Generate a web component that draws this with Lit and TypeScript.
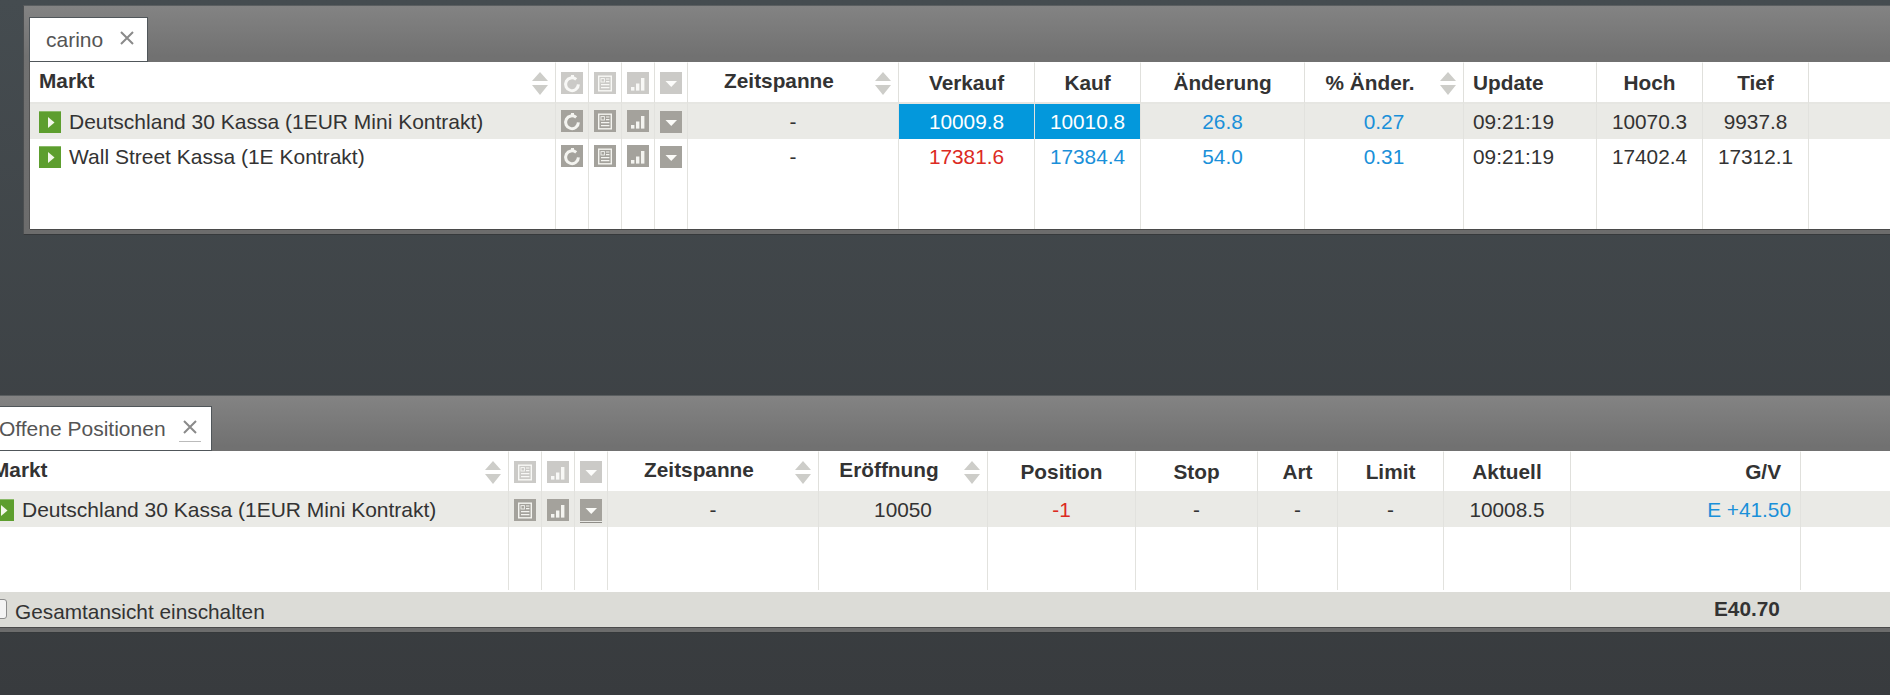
import { LitElement, html, css, svg } from 'lit';
import { customElement, property } from 'lit/decorators.js';

type IconName = 'refresh' | 'news' | 'bars' | 'menu';

interface Column {
  title?: string;
  width: number;
  kind?: 'market' | 'icon' | 'left' | 'right' | 'sort';
  icon?: IconName;
  raised?: boolean;
}

interface Cell {
  text: string;
  tone?: 'up' | 'down' | 'flash';
}

const ICONS: Record<IconName, unknown> = {
  refresh: svg`<path d="M15.2 7.4A6.4 6.4 0 1 0 17.4 12.4" fill="none" stroke="#f4f4f0" stroke-width="3"/><rect x="10" y="3" width="3" height="3.6" fill="#f4f4f0"/>`,
  news: svg`<rect x="4.7" y="4.2" width="12.6" height="14.6" fill="none" stroke="#f4f4f0" stroke-width="1.4"/><rect x="7" y="6.6" width="3.4" height="3.4" fill="none" stroke="#f4f4f0" stroke-width="0.9"/><path d="M12 7h3.4M12 9.6h3.4M7 12.6h8.4M7 15.6h8.4" stroke="#f4f4f0" stroke-width="1.2"/>`,
  bars: svg`<rect x="4" y="15" width="3.4" height="3.6" fill="#f4f4f0"/><rect x="9" y="11.5" width="3.4" height="7.1" fill="#f4f4f0"/><rect x="14" y="6" width="3.4" height="12.6" fill="#f4f4f0"/>`,
  menu: svg`<path d="M5.5 9h11.5l-5.75 6z" fill="#fbfbf8"/>`,
};

const WATCH_COLUMNS: Column[] = [
  { title: 'Markt', width: 526, kind: 'market', raised: true },
  { width: 33, kind: 'icon', icon: 'refresh' },
  { width: 33, kind: 'icon', icon: 'news' },
  { width: 33, kind: 'icon', icon: 'bars' },
  { width: 33, kind: 'icon', icon: 'menu' },
  { title: 'Zeitspanne', width: 211, kind: 'sort', raised: true },
  { title: 'Verkauf', width: 136 },
  { title: 'Kauf', width: 106 },
  { title: 'Änderung', width: 164 },
  { title: '% Änder.', width: 159, kind: 'sort' },
  { title: 'Update', width: 133, kind: 'left' },
  { title: 'Hoch', width: 106 },
  { title: 'Tief', width: 106 },
  { width: 200 },
];

const WATCH_ROWS: Cell[][] = [
  [
    { text: 'Deutschland 30 Kassa (1EUR Mini Kontrakt)' },
    { text: '' }, { text: '' }, { text: '' }, { text: '' },
    { text: '-' },
    { text: '10009.8', tone: 'flash' },
    { text: '10010.8', tone: 'flash' },
    { text: '26.8', tone: 'up' },
    { text: '0.27', tone: 'up' },
    { text: '09:21:19' },
    { text: '10070.3' },
    { text: '9937.8' },
    { text: '' },
  ],
  [
    { text: 'Wall Street Kassa (1E Kontrakt)' },
    { text: '' }, { text: '' }, { text: '' }, { text: '' },
    { text: '-' },
    { text: '17381.6', tone: 'down' },
    { text: '17384.4', tone: 'up' },
    { text: '54.0', tone: 'up' },
    { text: '0.31', tone: 'up' },
    { text: '09:21:19' },
    { text: '17402.4' },
    { text: '17312.1' },
    { text: '' },
  ],
];

const POSITION_COLUMNS: Column[] = [
  { title: 'Markt', width: 526, kind: 'market', raised: true },
  { width: 33, kind: 'icon', icon: 'news' },
  { width: 33, kind: 'icon', icon: 'bars' },
  { width: 33, kind: 'icon', icon: 'menu' },
  { title: 'Zeitspanne', width: 211, kind: 'sort', raised: true },
  { title: 'Eröffnung', width: 169, kind: 'sort', raised: true },
  { title: 'Position', width: 148 },
  { title: 'Stop', width: 122 },
  { title: 'Art', width: 80 },
  { title: 'Limit', width: 106 },
  { title: 'Aktuell', width: 127 },
  { title: 'G/V', width: 230, kind: 'right' },
  { width: 200 },
];

const POSITION_ROWS: Cell[][] = [
  [
    { text: 'Deutschland 30 Kassa (1EUR Mini Kontrakt)' },
    { text: '' }, { text: '' }, { text: '' },
    { text: '-' },
    { text: '10050' },
    { text: '-1', tone: 'down' },
    { text: '-' },
    { text: '-' },
    { text: '-' },
    { text: '10008.5' },
    { text: 'E +41.50', tone: 'up' },
    { text: '' },
  ],
];

@customElement('trade-panel')
export class TradePanel extends LitElement {
  @property() label = '';
  @property({ type: Boolean }) compact = false;
  @property({ type: Array }) columns: Column[] = [];
  @property({ type: Array }) rows: Cell[][] = [];

  static styles = css`
    :host {
      display: block;
      font-family: 'Liberation Sans', Arial, sans-serif;
      font-size: 20.8px;
      color: #333;
    }

    .frame {
      border-top: 1px solid #5a5e60;
      border-left: 1px solid #4c4f51;
      border-bottom: 1px solid #36393b;
      background: linear-gradient(#838383, #717171 50px, #6c6c6c);
      padding: 0 0 5px 5px;
    }

    .bar {
      display: flex;
      align-items: flex-end;
      height: 56px;
      box-sizing: border-box;
    }

    .compact .bar {
      height: 55px;
    }

    .tab {
      display: flex;
      align-items: center;
      gap: 17px;
      height: 45px;
      box-sizing: border-box;
      padding: 0 13px 0 16px;
      background: #fff;
      border: 1px solid #50565a;
      color: #555;
      font-size: 21px;
    }

    .close {
      display: block;
      margin-top: -3px;
    }

    .compact .tab {
      gap: 13px;
      padding-right: 10px;
    }

    .compact .close {
      box-sizing: content-box;
      border-bottom: 1px solid #bbb;
      padding: 0 4px 7px;
      margin-top: 4px;
    }

    .body {
      margin-left: 1px;
      background: #fff;
      box-shadow: -1px 0 0 #555, 0 1px 0 #4a4a4a;
    }

    table {
      table-layout: fixed;
      border-collapse: separate;
      border-spacing: 0;
      width: max-content;
    }

    th {
      height: 42px;
      box-sizing: border-box;
      padding: 0;
      border-top: 1px solid #fff;
      border-bottom: 2px solid #e6e6e2;
      border-right: 1px solid #e0e0dc;
      font-weight: 700;
      text-align: center;
      vertical-align: middle;
      position: relative;
    }

    .compact th {
      height: 40px;
      border-bottom: 0;
    }

    td {
      height: 35px;
      box-sizing: border-box;
      padding: 0;
      border-right: 1px solid #e2e2de;
      text-align: center;
      vertical-align: middle;
      white-space: nowrap;
      overflow: hidden;
    }

    .compact td {
      height: 36px;
      padding-top: 1px;
    }

    td.filler {
      height: 55px;
      padding: 0;
    }

    .compact td.filler {
      height: 63px;
    }

    tr.odd td {
      background: #eaeae6;
    }

    th span.title {
      display: block;
    }

    th.raised span.title {
      margin-top: -4px;
    }

    th.sort {
      padding-right: 28px;
    }

    th.market,
    td.market {
      text-align: left;
      padding-left: 9px;
    }

    td.market {
      display: flex;
      align-items: center;
      gap: 8px;
      font-size: 21px;
    }

    th.left,
    td.left {
      text-align: left;
      padding-left: 9px;
    }

    th.right {
      text-align: right;
      padding-right: 19px;
    }

    td.right {
      text-align: right;
      padding-right: 9px;
    }

    td.up {
      color: #1a90d9;
    }

    td.down {
      color: #dc2a22;
    }

    tr td.flash {
      background: #0398dc;
      color: #fff;
    }

    .sorter {
      position: absolute;
      top: 9px;
      right: 7px;
      display: block;
    }

    .play {
      flex: none;
      display: block;
      margin-top: 1px;
    }

    .tool {
      display: block;
      margin: 6px auto 0;
    }

    .compact td .tool {
      margin-top: 8px;
    }

    td.icon {
      padding: 0;
      vertical-align: top;
    }

    th .tool {
      opacity: 0.56;
      margin-top: 0;
    }

    td .tool.menu {
      margin-top: 7px;
    }

    .compact td .tool.menu {
      margin-top: 8px;
      box-shadow: 0 1px 0 #eaeae6, 0 2px 0 #8f8d88;
    }
  `;

  private _icon(name: IconName) {
    return html`<svg class="tool ${name}" width="22" height="22" viewBox="0 0 22 22">
      <rect width="22" height="22" fill="#a4a29c"></rect>
      ${ICONS[name]}
    </svg>`;
  }

  private _head(col: Column) {
    const cls = [col.kind ?? '', col.raised ? 'raised' : ''].join(' ');
    if (col.kind === 'icon') return html`<th class=${cls}>${this._icon(col.icon!)}</th>`;
    const sortable = col.kind === 'sort' || col.kind === 'market';
    return html`<th class=${cls}>
      <span class="title">${col.title ?? ''}</span>
      ${sortable
        ? html`<svg class="sorter" width="16" height="23" viewBox="0 0 16 23">
            <path d="M8 0l8 9H0zM0 13h16l-8 10z" fill="#cdcdc9"></path>
          </svg>`
        : ''}
    </th>`;
  }

  private _cell(col: Column, cell: Cell) {
    if (col.kind === 'icon') return html`<td class="icon">${this._icon(col.icon!)}</td>`;
    if (col.kind === 'market') {
      return html`<td class="market">
        <svg class="play" width="22" height="22" viewBox="0 0 22 22">
          <rect width="22" height="22" fill="#5d9e2e"></rect>
          <rect width="22" height="1" fill="#8aba68"></rect>
          <path d="M9 6l6.5 5.5L9 17z" fill="#f2f6ea"></path>
        </svg>
        ${cell.text}
      </td>`;
    }
    return html`<td class="${col.kind ?? ''} ${cell.tone ?? ''}">${cell.text}</td>`;
  }

  render() {
    return html`
      <div class="frame ${this.compact ? 'compact' : ''}">
        <div class="bar">
          <div class="tab">
            ${this.label}
            <svg class="close" width="14" height="14" viewBox="0 0 14 14">
              <path d="M1 1l12 12M13 1L1 13" stroke="#8a8a8a" stroke-width="2"></path>
            </svg>
          </div>
        </div>
        <div class="body">
          <table>
            <colgroup>
              ${this.columns.map((c) => html`<col style="width:${c.width}px" />`)}
            </colgroup>
            <thead>
              <tr>${this.columns.map((c) => this._head(c))}</tr>
            </thead>
            <tbody>
              ${this.rows.map(
                (row, i) => html`<tr class=${i % 2 === 0 ? 'odd' : ''}>
                  ${this.columns.map((c, j) => this._cell(c, row[j]))}
                </tr>`
              )}
              <tr>${this.columns.map(() => html`<td class="filler"></td>`)}</tr>
            </tbody>
          </table>
          <slot></slot>
        </div>
      </div>
    `;
  }
}

@customElement('app-root')
export class AppRoot extends LitElement {
  static styles = css`
    :host {
      display: block;
      width: 1890px;
      height: 695px;
      overflow: hidden;
      background: linear-gradient(#454c50, #383b3e);
      font-family: 'Liberation Sans', Arial, sans-serif;
      font-size: 21px;
      color: #333;
    }

    .watch {
      width: 2000px;
      margin: 0 0 0 23px;
      padding-top: 5px;
    }

    .positions {
      width: 2000px;
      margin: 160px 0 0 -24px;
    }

    .footer {
      display: flex;
      align-items: center;
      justify-content: space-between;
      height: 35px;
      margin-top: 2px;
      background: #dcdcd7;
    }

    .toggle {
      display: flex;
      align-items: center;
      gap: 8px;
      padding-top: 4px;
    }

    input {
      appearance: none;
      width: 20px;
      height: 20px;
      margin: -6px 0 0 4px;
      background: #f4f4f4;
      border: 1px solid #8d8d8d;
      border-radius: 3px;
    }

    .total {
      width: 262px;
      font-size: 20.8px;
      font-weight: 700;
      margin-top: -1px;
    }
  `;

  render() {
    return html`
      <div class="watch">
        <trade-panel label="carino" .columns=${WATCH_COLUMNS} .rows=${WATCH_ROWS}></trade-panel>
      </div>
      <div class="positions">
        <trade-panel label="Offene Positionen" compact .columns=${POSITION_COLUMNS} .rows=${POSITION_ROWS}>
          <div class="footer">
            <label class="toggle"><input type="checkbox" />Gesamtansicht einschalten</label>
            <span class="total">E40.70</span>
          </div>
        </trade-panel>
      </div>
    `;
  }
}
